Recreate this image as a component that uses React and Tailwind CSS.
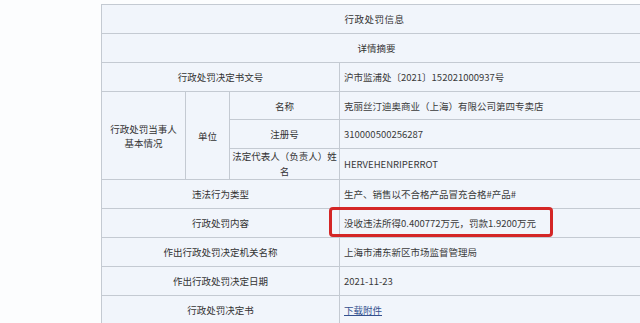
import React from 'react'

const label = 'border border-[#c4cad2] text-center text-[#333] align-middle'
const value = 'border border-[#c4cad2] text-left text-[#3a3a3a] pl-[4px] align-middle'

export default function App() {
  return (
    <div
      className="w-[640px] h-[323px] overflow-hidden bg-[#fcfdfe] pt-[4px] pl-[101px]"
      style={{ fontFamily: '"Noto Sans CJK SC", "Noto Sans", sans-serif' }}
    >
      <div className="relative w-[546px]">
        <table className="table-fixed border-collapse w-[546px] bg-[#f1f5fb] text-[9.5px] leading-[14px]">
          <colgroup>
            <col className="w-[84px]" />
            <col className="w-[44px]" />
            <col className="w-[110px]" />
            <col className="w-[308px]" />
          </colgroup>
          <tbody>
            <tr className="h-[29px]">
              <td colSpan={4} className={label + ' tracking-[0.5px]'}>行政处罚信息</td>
            </tr>
            <tr className="h-[29px]">
              <td colSpan={4} className={label}>
                <span className="pl-[4px]">详情摘要</span>
              </td>
            </tr>
            <tr className="h-[29px]">
              <td colSpan={3} className={label}>行政处罚决定书文号</td>
              <td className={value}>沪市监浦处〔2021〕152021000937号</td>
            </tr>
            <tr className="h-[28px]">
              <td rowSpan={3} className={label + ' px-[6px]'}>行政处罚当事人基本情况</td>
              <td rowSpan={3} className={label}>单位</td>
              <td className={label}>名称</td>
              <td className={value}>克丽丝汀迪奥商业（上海）有限公司第四专卖店</td>
            </tr>
            <tr className="h-[29px]">
              <td className={label}>注册号</td>
              <td className={value}>310000500256287</td>
            </tr>
            <tr className="h-[30px]">
              <td className={label + ' px-0 leading-[15px]'}>法定代表人（负责人）姓名</td>
              <td className={value}>HERVEHENRIPERROT</td>
            </tr>
            <tr className="h-[29px]">
              <td colSpan={3} className={label}>违法行为类型</td>
              <td className={value}>生产、销售以不合格产品冒充合格#产品#</td>
            </tr>
            <tr className="h-[29px]">
              <td colSpan={3} className={label}>行政处罚内容</td>
              <td className={value}>没收违法所得0.400772万元，罚款1.9200万元</td>
            </tr>
            <tr className="h-[29px]">
              <td colSpan={3} className={label}>作出行政处罚决定机关名称</td>
              <td className={value}>上海市浦东新区市场监督管理局</td>
            </tr>
            <tr className="h-[29px]">
              <td colSpan={3} className={label}>作出行政处罚决定日期</td>
              <td className={value}>2021-11-23</td>
            </tr>
            <tr className="h-[29px]">
              <td colSpan={3} className={label}>行政处罚决定书</td>
              <td className={value}>
                <a href="#" className="text-[#34518f] underline">下载附件</a>
              </td>
            </tr>
          </tbody>
        </table>
        {/* red highlight around the penalty row */}
        <div className="absolute left-[228px] top-[203px] w-[224px] h-[30px] border-[3px] border-[#d42626] rounded-[4px] pointer-events-none" />
      </div>
    </div>
  )
}
